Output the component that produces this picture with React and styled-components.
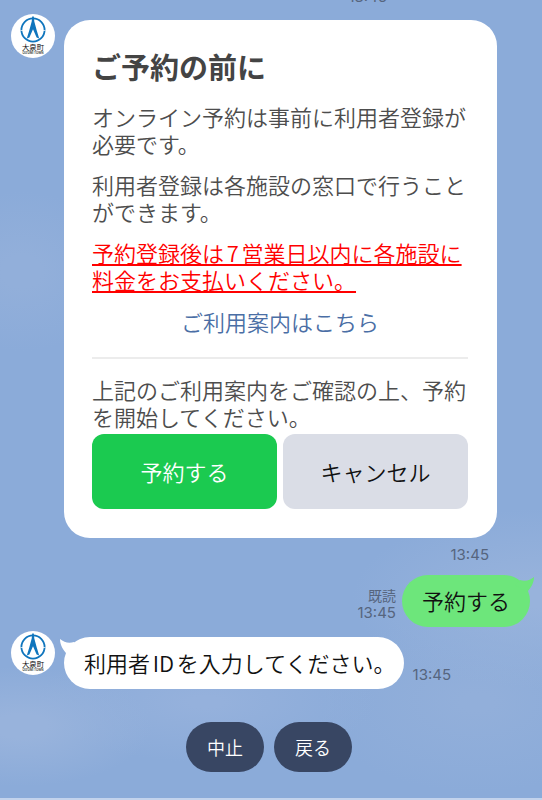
import React from "react";
import styled, { createGlobalStyle } from "styled-components";

const GlobalStyle = createGlobalStyle`
  * {
    box-sizing: border-box;
  }

  body {
    margin: 0;
    background-color: #8babd9;
    font-family: "Noto Sans CJK JP", sans-serif;
  }
`;

const Screen = styled.main`
  min-height: 100vh;
  display: flex;
  flex-direction: column;
  overflow: hidden;
  border-bottom: 2px solid #c3d3ec;
  background-color: #8babd9;
  background-image:
    radial-gradient(ellipse 100px 80px at 4% 34%, #92afda 20%, transparent 100%),
    radial-gradient(ellipse 190px 90px at 100% 75%, #98b3dc 10%, transparent 100%),
    radial-gradient(ellipse 130px 60px at 4% 91%, #98b3dc 20%, transparent 100%),
    radial-gradient(ellipse 170px 60px at 38% 88%, #95b1dc 10%, transparent 100%),
    radial-gradient(ellipse 160px 90px at 88% 88%, #92afda 10%, transparent 100%);
`;

const PastRow = styled.div`
  height: 2px;
  margin-right: 155px;
  display: flex;
  justify-content: flex-end;
  align-items: flex-end;
  overflow: hidden;
`;

const Time = styled.time`
  color: #56657e;
  font-family: Inter, sans-serif;
  font-size: 15px;
  line-height: 18px;
`;

const PastTime = styled(Time)`
  line-height: 11px;
`;

const BotRow = styled.div`
  display: flex;
  align-items: flex-start;
  gap: 9px;
  padding-left: 11px;
  padding-right: ${(props) => (props.$wide ? "45px" : "8px")};
  margin-top: ${(props) => (props.$wide ? "12px" : "4px")};
`;

const Avatar = styled.svg`
  width: 44px;
  height: 44px;
  flex: none;
`;

const Card = styled.article`
  flex: 1;
  margin-top: 6px;
  padding: 28px 29px 29px 28px;
  border-radius: 26px;
  background-color: #fff;
  color: #4d4d4d;
`;

const Title = styled.h1`
  margin: 0 0 19px;
  color: #444;
  font-size: 29px;
  font-weight: 700;
  line-height: 36px;
`;

const Text = styled.p`
  margin: 0 0 14px;
  font-size: 22px;
  font-weight: 350;
  line-height: 27px;
  text-autospace: normal;
`;

const Warning = styled(Text)`
  margin-bottom: 15px;
  color: #f00;
  text-decoration: underline;
  text-decoration-thickness: 2px;
  text-underline-offset: 2px;
  text-decoration-skip-ink: none;
`;

const GuideLink = styled.a`
  display: block;
  color: #4a6ea5;
  font-size: 22px;
  font-weight: 350;
  line-height: 27px;
  text-align: center;
  text-decoration: none;
`;

const Divider = styled.hr`
  margin: 22px 0 17px;
  border: 0;
  border-top: 2px solid #ececec;
`;

const Actions = styled.div`
  display: grid;
  grid-template-columns: 1fr 1fr;
  gap: 6px;
  margin-top: -10px;
`;

const ActionButton = styled.button`
  height: 75px;
  padding: 0 0 2px;
  border: 0;
  border-radius: 12px;
  background-color: ${(props) => (props.$primary ? "#1bca50" : "#dadde6")};
  color: ${(props) => (props.$primary ? "#fff" : "#111")};
  font-family: inherit;
  font-size: 22px;
  font-weight: 350;
  cursor: pointer;
`;

const CardTime = styled(Time)`
  align-self: flex-end;
  margin: 8px 53px 0 0;
`;

const UserRow = styled.div`
  display: flex;
  justify-content: flex-end;
  align-items: flex-end;
  gap: 6px;
  margin-top: 11px;
  padding-right: 12px;
`;

const Meta = styled.div`
  display: flex;
  flex-direction: column;
  align-items: flex-end;
  padding-bottom: 5px;
`;

const ReadMark = styled.span`
  color: #56657e;
  font-size: 14px;
  line-height: 18px;
`;

const Bubble = styled.p`
  position: relative;
  margin: ${(props) => (props.$mine ? "0" : "6px 0 0")};
  padding: ${(props) => (props.$mine ? "11px 20px 13px" : "11px 8px 13px 20px")};
  border-radius: 26px;
  background-color: ${(props) => (props.$mine ? "#6de67b" : "#fff")};
  color: #111;
  font-size: 22px;
  font-weight: 350;
  line-height: 28px;
  text-autospace: normal;
`;

const Tail = styled.svg`
  position: absolute;
  top: 1px;
  ${(props) => (props.$mine ? "right: -4px;" : "left: -4px;")}
  width: 24px;
  height: 18px;
  transform: ${(props) => (props.$mine ? "none" : "scaleX(-1)")};
`;

const SideTime = styled(Time)`
  align-self: flex-end;
  margin-bottom: 5px;
`;

const QuickReplies = styled.div`
  display: flex;
  justify-content: center;
  gap: 10px;
  margin-top: 33px;
  padding-right: 4px;
`;

const QuickButton = styled.button`
  width: 78px;
  height: 50px;
  padding: 0 0 1px;
  border: 0;
  border-radius: 25px;
  background-color: #384663;
  color: #fff;
  font-family: inherit;
  font-size: 18px;
  font-weight: 350;
  cursor: pointer;
`;

const TownAvatar = () => (
  <Avatar viewBox="0 0 44 44" role="img" aria-label="大泉町">
    <circle cx="22" cy="22" r="22" fill="#fff" />
    <circle cx="22" cy="16" r="11.6" fill="none" stroke="#0f75bd" strokeWidth="1.8" />
    <path d="M9.5 16.5h2.5M32 16.5h2.5" stroke="#fff" strokeWidth="0.7" />
    <path
      d="M21.2 2.6h1.6l.5 5 2.3 8.5 2.6 8.4-2.6-1L22 15.2l-3.6 8.3-2.6 1 2.6-8.4 2.3-8.5z"
      fill="#0f75bd"
    />
    <text
      x="22"
      y="36.2"
      textAnchor="middle"
      fontFamily="Noto Sans CJK JP, sans-serif"
      fontSize="7.4"
      fontWeight="400"
      fill="#111"
    >
      大泉町
    </text>
    <text
      x="22"
      y="39.6"
      textAnchor="middle"
      fontFamily="Inter, sans-serif"
      fontSize="3"
      fontWeight="600"
      fill="#333"
    >
      OIZUMI TOWN
    </text>
  </Avatar>
);

const BubbleTail = ({ mine }) => (
  <Tail $mine={mine} viewBox="0 0 24 18" aria-hidden="true">
    <path
      d="M24 1C20 4.5 15 5.5 10 4L5 9L17 16C21 12 24 7 24 1Z"
      fill={mine ? "#6de67b" : "#fff"}
    />
  </Tail>
);

const App = () => {
  return (
    <>
      <GlobalStyle />
      <Screen>
        <PastRow>
          <PastTime>13:45</PastTime>
        </PastRow>

        <BotRow $wide>
          <TownAvatar />
          <Card>
            <Title>ご予約の前に</Title>
            <Text>オンライン予約は事前に利用者登録が必要です。</Text>
            <Text>利用者登録は各施設の窓口で行うことができます。</Text>
            <Warning>予約登録後は7営業日以内に各施設に料金をお支払いください。</Warning>
            <GuideLink href="#">ご利用案内はこちら</GuideLink>
            <Divider />
            <Text>上記のご利用案内をご確認の上、予約を開始してください。</Text>
            <Actions>
              <ActionButton type="button" $primary>
                予約する
              </ActionButton>
              <ActionButton type="button">キャンセル</ActionButton>
            </Actions>
          </Card>
        </BotRow>
        <CardTime>13:45</CardTime>

        <UserRow>
          <Meta>
            <ReadMark>既読</ReadMark>
            <Time>13:45</Time>
          </Meta>
          <Bubble $mine>
            予約する
            <BubbleTail mine />
          </Bubble>
        </UserRow>

        <BotRow>
          <TownAvatar />
          <Bubble>
            利用者IDを入力してください。
            <BubbleTail />
          </Bubble>
          <SideTime>13:45</SideTime>
        </BotRow>

        <QuickReplies>
          <QuickButton type="button">中止</QuickButton>
          <QuickButton type="button">戻る</QuickButton>
        </QuickReplies>
      </Screen>
    </>
  );
};

export default App;
